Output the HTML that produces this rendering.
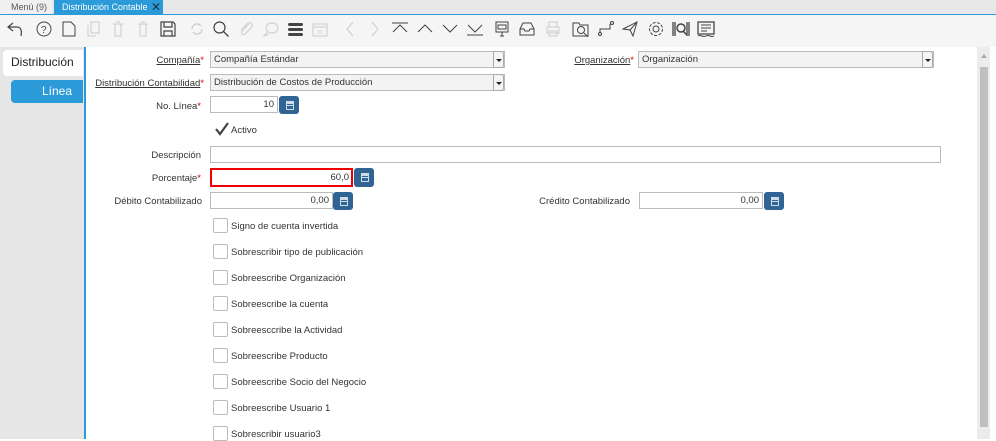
<!DOCTYPE html>
<html><head><meta charset="utf-8"><style>
*{margin:0;padding:0;box-sizing:border-box}
body{width:996px;height:439px;overflow:hidden;background:#fff;font-family:"Liberation Sans",sans-serif;font-size:9.5px;color:#333;position:relative}
.a{position:absolute}
.lbl{position:absolute;text-align:right;font-size:9.5px;color:#333;white-space:nowrap}
.lbl u{text-decoration:underline}
.req{color:#d00}
.inp{position:absolute;border:1px solid #bbb;background:#fff;height:17px;font-size:9.5px;line-height:15px;padding:0 3px}
.ro{background:#f3f3f3}
.dd{position:absolute;right:0;top:-1px;width:11px;height:17px;border:1px solid #aaa;border-radius:0 3px 3px 0;background:#f5f5f5}
.dd:after{content:"";position:absolute;left:2px;top:7px;border-left:3px solid transparent;border-right:3px solid transparent;border-top:3px solid #222}
.btn{position:absolute;background:#2f6494;border-radius:3px;height:18px;width:20px}
.btn:after{content:"";position:absolute;left:7px;top:5px;width:6px;height:7px;border:1px solid #cfdbe7;background:linear-gradient(#cfdbe7 0 2px,transparent 2px 3px,#cfdbe7 3px 4px,transparent 4px)}
.cb{position:absolute;left:213px;width:15px;height:15px;border:1px solid #bbb;border-radius:2px;background:#fff}
.cbl{position:absolute;left:231px;font-size:9.5px;color:#333}
svg{position:absolute;top:21px}
</style></head><body>
<div class="a" style="left:0;top:0;width:996px;height:15px;background:#e8e8e8"></div>
<div class="a" style="left:0;top:0;width:52px;height:15px;background:#f0f0f0;font-size:9px;line-height:14px;padding-left:11px;color:#555">Menú (9)</div>
<div class="a" style="left:54px;top:0;width:109px;height:15px;background:#2a9ad8;color:#fff;font-size:9px;line-height:14px;padding-left:8px">Distribución Contable</div>
<div class="a" style="left:151px;top:1px;color:#234;font-size:12px;line-height:12px">✕</div>
<div class="a" style="left:0;top:14px;width:996px;height:1px;background:#2a9ad8"></div>
<div class="a" style="left:0;top:15px;width:996px;height:32px;background:#f5f5f5"></div>
<svg style="left:6px" width="18" height="16" viewBox="0 0 18 16"><path d="M7 2L2 6l5 4M2 6h9c4 0 5 4 4 9" fill="none" stroke="#444" stroke-width="1.2"/></svg>
<svg style="left:36px" width="16" height="16"><circle cx="8" cy="8" r="7" fill="none" stroke="#444"/><text x="5" y="12" font-size="10" fill="#444">?</text></svg>
<svg style="left:62px" width="14" height="16"><path d="M1 1h8l4 4v10H1z" fill="none" stroke="#444"/></svg>
<svg style="left:87px" width="14" height="16"><path d="M4 1h8v11H4zM1 4v11h8" fill="none" stroke="#ccc"/></svg>
<svg style="left:112px" width="12" height="16"><path d="M1 3h10M3 3v12h6V3M4 1h4" fill="none" stroke="#ccc"/></svg>
<svg style="left:137px" width="12" height="16"><path d="M1 3h10M3 3v12h6V3M4 1h4" fill="none" stroke="#ccc"/></svg>
<svg style="left:160px" width="16" height="16"><path d="M1 1h12l2 2v12H1zM4 1v5h8V1M4 15v-5h8v5" fill="none" stroke="#444" stroke-width="1.2"/></svg>
<svg style="left:189px" width="16" height="16"><path d="M3 8a5 5 0 0 1 9-3M13 8a5 5 0 0 1-9 3" fill="none" stroke="#ccc" stroke-width="1.3"/></svg>
<svg style="left:213px" width="16" height="16"><circle cx="6.5" cy="6.5" r="5.5" fill="none" stroke="#444" stroke-width="1.2"/><path d="M10.5 10.5l5 5" stroke="#444" stroke-width="1.3"/></svg>
<svg style="left:238px" width="16" height="16"><path d="M11 3L4 10a2 2 0 0 0 3 3l7-7a3 3 0 0 0-4-4L3 9" fill="none" stroke="#ccc"/></svg>
<svg style="left:263px" width="16" height="16"><ellipse cx="9" cy="7" rx="6" ry="5" fill="none" stroke="#ccc"/><path d="M4 11l-3 4 5-2" fill="none" stroke="#ccc"/></svg>
<svg style="left:287px" width="17" height="16"><rect x="1" y="2" width="15" height="3" rx="1.5" fill="#444"/><rect x="1" y="7" width="15" height="3" rx="1.5" fill="#444"/><rect x="1" y="12" width="15" height="3" rx="1.5" fill="#444"/></svg>
<svg style="left:312px" width="16" height="16"><path d="M1 3h14v12H1zM1 6h14" fill="none" stroke="#ccc"/><text x="5" y="13" font-size="5" fill="#ccc">31</text></svg>
<svg style="left:345px" width="10" height="16"><path d="M8 1L2 8l6 7" fill="none" stroke="#ccc"/></svg>
<svg style="left:370px" width="10" height="16"><path d="M2 1l6 7-6 7" fill="none" stroke="#ccc"/></svg>
<svg style="left:391px" width="18" height="16"><path d="M1 2h16M2 11l7-7 7 7" fill="none" stroke="#444"/></svg>
<svg style="left:416px" width="18" height="16"><path d="M2 11l7-7 7 7" fill="none" stroke="#444"/></svg>
<svg style="left:441px" width="18" height="16"><path d="M2 4l7 7 7-7" fill="none" stroke="#444"/></svg>
<svg style="left:466px" width="18" height="16"><path d="M2 4l7 7 7-7M1 14h16" fill="none" stroke="#444"/></svg>
<svg style="left:495px" width="14" height="16"><path d="M1 1h12v10H1zM3 4h8v4H3zM7 11v4M5 15h4" fill="none" stroke="#444"/></svg>
<svg style="left:519px" width="16" height="16"><path d="M1 8l3-6h8l3 6v6H1zM1 8h4l1 2h4l1-2h4" fill="none" stroke="#444"/></svg>
<svg style="left:545px" width="16" height="16"><path d="M4 6V1h8v5M2 6h12v6H2zM4 10h8v5H4z" fill="none" stroke="#ccc"/></svg>
<svg style="left:572px" width="18" height="16"><path d="M1 2h6l1 2h8v11H1z" fill="none" stroke="#444"/><circle cx="9" cy="9" r="3.5" fill="none" stroke="#444"/><path d="M12 12l4 4" stroke="#444"/></svg>
<svg style="left:598px" width="16" height="16"><circle cx="2" cy="13" r="1.5" fill="none" stroke="#444"/><circle cx="14" cy="2" r="1.5" fill="none" stroke="#444"/><path d="M2 11V8h10V3" fill="none" stroke="#444"/></svg>
<svg style="left:622px" width="16" height="16"><path d="M1 8L15 1l-4 14-3-6zM8 9l7-8" fill="none" stroke="#444"/></svg>
<svg style="left:648px" width="16" height="16"><circle cx="8" cy="8" r="3" fill="none" stroke="#444"/><circle cx="8" cy="8" r="6.5" fill="none" stroke="#444" stroke-dasharray="3 1.5"/></svg>
<svg style="left:672px" width="18" height="16"><path d="M1 1v14M3 1v14M15 1v14M17 1v14" stroke="#444" stroke-width="1.3"/><circle cx="9" cy="7" r="4" fill="none" stroke="#444" stroke-width="1.5"/><path d="M11 10l4 4" stroke="#444" stroke-width="1.5"/></svg>
<svg style="left:697px" width="18" height="16"><path d="M1 1h16v12H1z" fill="none" stroke="#444" stroke-width="1.3"/><path d="M4 4h10M4 7h10M4 10h6M1 15c3-2 5 2 8 0s5 2 8 0" fill="none" stroke="#444"/></svg>
<div class="a" style="left:0;top:47px;width:84px;height:392px;background:#e6e6e6"></div>
<div class="a" style="left:3px;top:50px;width:80px;height:26px;background:#fff;border-radius:4px 0 0 4px;font-size:12px;line-height:25px;padding-left:8px;color:#222">Distribución</div>
<div class="a" style="left:11px;top:80px;width:72px;height:23px;background:#2a9ad8;border-radius:4px 0 0 4px;font-size:12px;line-height:22px;color:#fff;padding-left:31px">Línea</div>
<div class="a" style="left:84px;top:47px;width:2px;height:392px;background:#2a9ad8"></div>
<div class="a" style="left:977px;top:47px;width:13px;height:392px;background:#ececec"></div>
<div class="a" style="left:980px;top:67px;width:8px;height:360px;background:#c0c0c0"></div>
<div class="a" style="left:981px;top:54px;border-left:3px solid transparent;border-right:3px solid transparent;border-bottom:4px solid #aaa"></div>
<div class="lbl" style="right:792px;top:55px"><u>Compañía</u><span class="req">*</span></div>
<div class="inp ro" style="left:210px;top:51px;width:295px">Compañía Estándar<div class="dd"></div></div>
<div class="lbl" style="right:362px;top:55px"><u>Organización</u><span class="req">*</span></div>
<div class="inp ro" style="left:638px;top:51px;width:296px">Organización<div class="dd"></div></div>
<div class="lbl" style="right:792px;top:78px"><u>Distribución Contabilidad</u><span class="req">*</span></div>
<div class="inp ro" style="left:210px;top:74px;width:295px">Distribución de Costos de Producción<div class="dd"></div></div>
<div class="lbl" style="right:795px;top:101px">No. Línea<span class="req">*</span></div>
<div class="inp" style="left:210px;top:96px;width:68px;text-align:right">10</div>
<div class="btn" style="left:279px;top:96px"></div>
<svg style="left:214px;top:121px" width="16" height="16"><path d="M2 8l4 5 8-11" fill="none" stroke="#444" stroke-width="2.2"/></svg>
<div class="cbl" style="top:125px">Activo</div>
<div class="lbl" style="right:795px;top:150px">Descripción</div>
<div class="inp" style="left:210px;top:146px;width:731px"></div>
<div class="lbl" style="right:795px;top:173px">Porcentaje<span class="req">*</span></div>
<div class="inp" style="left:210px;top:168px;width:143px;height:19px;border:2px solid #e00;text-align:right;line-height:15px;padding-right:2px">60,0</div>
<div class="btn" style="left:354px;top:168px;height:19px"></div>
<div class="lbl" style="right:794px;top:196px">Débito Contabilizado</div>
<div class="inp" style="left:210px;top:192px;width:123px;text-align:right">0,00</div>
<div class="btn" style="left:333px;top:192px"></div>
<div class="lbl" style="right:366px;top:196px">Crédito Contabilizado</div>
<div class="inp" style="left:639px;top:192px;width:124px;text-align:right">0,00</div>
<div class="btn" style="left:764px;top:192px"></div>
<div class="cb" style="top:218px"></div><div class="cbl" style="top:221px">Signo de cuenta invertida</div>
<div class="cb" style="top:244px"></div><div class="cbl" style="top:247px">Sobrescribir tipo de publicación</div>
<div class="cb" style="top:270px"></div><div class="cbl" style="top:273px">Sobreescribe Organización</div>
<div class="cb" style="top:296px"></div><div class="cbl" style="top:299px">Sobreescribe la cuenta</div>
<div class="cb" style="top:322px"></div><div class="cbl" style="top:325px">Sobreesccribe la Actividad</div>
<div class="cb" style="top:348px"></div><div class="cbl" style="top:351px">Sobreescribe Producto</div>
<div class="cb" style="top:374px"></div><div class="cbl" style="top:377px">Sobreescribe Socio del Negocio</div>
<div class="cb" style="top:400px"></div><div class="cbl" style="top:403px">Sobreescribe Usuario 1</div>
<div class="cb" style="top:426px"></div><div class="cbl" style="top:429px">Sobrescribir usuario3</div>
</body></html>
